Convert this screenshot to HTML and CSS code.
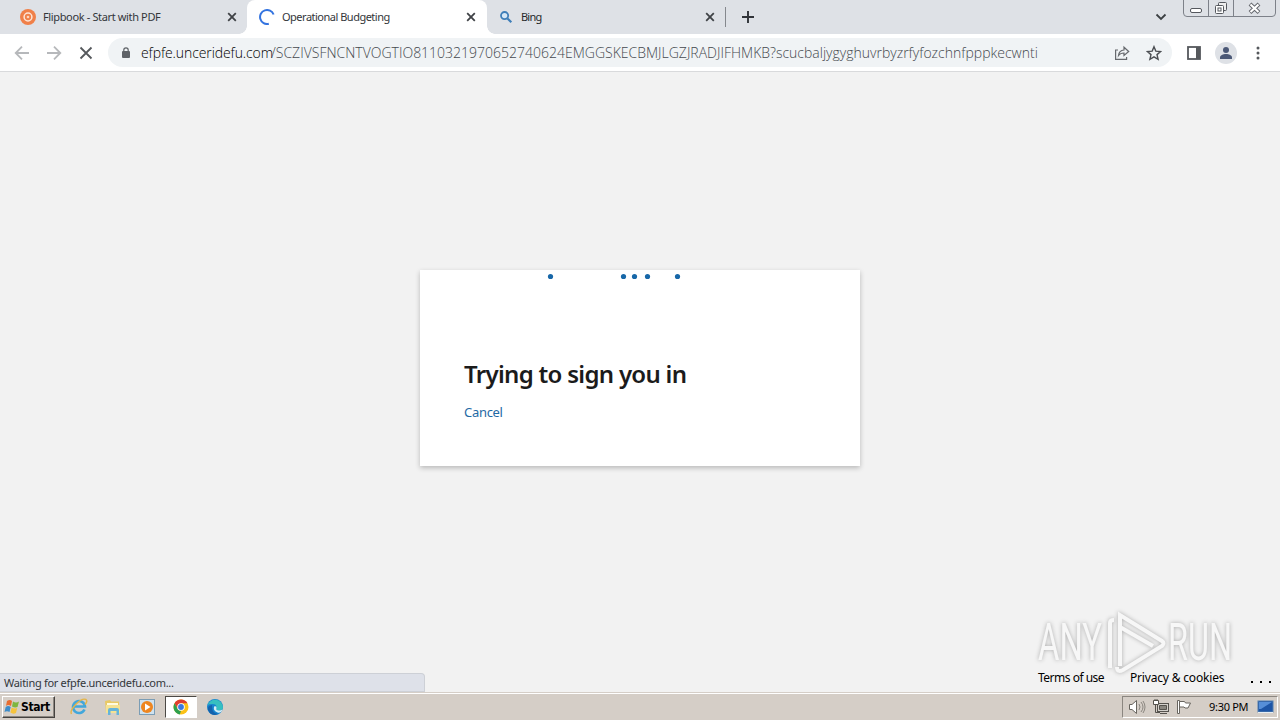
FILE: index.html
```html
<!DOCTYPE html>
<html lang="en">
<head>
<meta charset="utf-8">
<title>Operational Budgeting</title>
<link rel="stylesheet" href="styles.css">
</head>
<body>
<div class="desktop">
  <header class="tabstrip">
    <div class="tab tab-first">
      <svg class="favicon" width="16" height="16" viewBox="0 0 16 16"><circle cx="8" cy="8" r="8" fill="#f08049"/><circle cx="8" cy="8" r="3.900" fill="none" stroke="#fde5d8" stroke-width="1.500"/><circle cx="8" cy="8" r="1.300" fill="#fbd5c0"/></svg>
      <span class="tab-title t-flip">Flipbook - Start with PDF</span>
      <svg class="close" width="10" height="10" viewBox="0 0 10 10"><path d="M1.2 1.2l7.600 7.600M8.800 1.200L1.200 8.800"/></svg>
    </div>
    <div class="tab tab-active">
      <svg class="favicon" width="16" height="16" viewBox="0 0 16 16"><path d="M14.600 5.500A7 7 0 1 0 9.800 14.800" fill="none" stroke="#3474e0" stroke-width="2"/></svg>
      <span class="tab-title t-oper">Operational Budgeting</span>
      <svg class="close" width="10" height="10" viewBox="0 0 10 10"><path d="M1.2 1.2l7.600 7.600M8.800 1.200L1.200 8.800"/></svg>
    </div>
    <div class="tab tab-last">
      <svg class="favicon" width="16" height="16" viewBox="0 0 16 16"><circle cx="6.600" cy="6.600" r="3.600" fill="#d5e7f6" stroke="#3e7eb8" stroke-width="1.800"/><path d="M9.500 9.500l3.800 3.800" stroke="#3e7eb8" stroke-width="2.200"/></svg>
      <span class="tab-title t-bing">Bing</span>
      <svg class="close" width="10" height="10" viewBox="0 0 10 10"><path d="M1.2 1.2l7.600 7.600M8.800 1.200L1.200 8.800"/></svg>
    </div>
    <i class="separator"></i>
    <svg class="newtab" width="12" height="12" viewBox="0 0 12 12"><path d="M6 0v12M0 6h12" stroke="#303338" stroke-width="1.900"/></svg>
    <svg class="chevron" width="12" height="8" viewBox="0 0 12 8"><path d="M1.500 1.500L6 6l4.500-4.500" fill="none" stroke="#3c4043" stroke-width="1.800"/></svg>
    <div class="window-buttons">
      <svg width="93" height="17" viewBox="0 0 93 17" fill="none">
        <path d="M.5 0v13q0 3.500 3.500 3.500h85q3.500 0 3.500-3.500V0M25.500 0v16M50.500 0v16" stroke="#7d8189"/>
        <rect x="7.500" y="8.500" width="11" height="4" rx="1.500" fill="#fff" stroke="#55585e"/>
        <rect x="35.500" y="2.500" width="8" height="8" rx="1" fill="#eee" stroke="#55585e"/>
        <rect x="32.500" y="5.500" width="8" height="8" rx="1" fill="#fff" stroke="#55585e"/><rect x="35" y="8" width="3" height="3" stroke="#55585e"/>
        <path d="M67 4l9 8.500M76 4l-9 8.500" stroke="#62656b" stroke-width="4"/><path d="M67.500 4.500l8 7.500M75.500 4.500l-8 7.500" stroke="#fff" stroke-width="2.200"/>
      </svg>
    </div>
  </header>

  <nav class="toolbar">
    <svg class="nav-icon" width="16" height="16" viewBox="0 0 16 16"><path d="M15 8H2M8 1.700L1.700 8 8 14.300" stroke="#b6b8bb"/></svg>
    <svg class="nav-icon" width="16" height="16" viewBox="0 0 16 16"><path d="M1 8h13M8 1.700L14.300 8 8 14.300" stroke="#b6b8bb"/></svg>
    <svg class="nav-icon" width="16" height="16" viewBox="0 0 16 16"><path d="M2.500 2.500l11 11M13.500 2.500l-11 11" stroke="#55585c"/></svg>
    <div class="omnibox">
      <svg class="lock" width="8" height="11" viewBox="0 0 8 11"><rect y="4" width="8" height="7" rx="1" fill="#5f6368"/><path d="M1.800 5V3a2.200 2.200 0 0 1 4.400 0v2" fill="none" stroke="#5f6368" stroke-width="1.200"/></svg>
      <span class="url"><span class="host">efpfe.unceridefu.com</span><span class="path">/SCZIVSFNCNTVOGTIO8110321970652740624EMGGSKECBMJLGZJRADJIFHMKB?scucbaljygyghuvrbyzrfyfozchnfpppkecwnti</span></span>
      <svg class="share" width="16" height="16" viewBox="0 0 16 16" fill="none" stroke="#66696d" stroke-width="1.200"><path d="M4 5H1.600v9.400h11V12"/><path d="M4.500 10.500c.4-3.800 2.600-5.300 5.500-5.500V2.200L14.700 6.500 10 10.500V8c-2.500 0-4.300.8-5.500 2.500z"/></svg>
      <svg class="star" width="16" height="16" viewBox="0 0 16 16"><path d="M8 1.700l1.800 4.400 4.800.4-3.600 3.100 1.100 4.700L8 11.800l-4.100 2.500L5 9.600 1.400 6.500l4.800-.4z" fill="none" stroke="#4c4f53" stroke-width="1.400"/></svg>
    </div>
    <svg class="panel" width="14" height="14" viewBox="0 0 14 14"><rect x="1" y="1" width="12" height="12" fill="#fff" stroke="#55585c" stroke-width="1.800"/><path d="M9 1h4v12H9z" fill="#55585c"/></svg>
    <svg class="profile" width="22" height="22" viewBox="0 0 22 22"><circle cx="11" cy="11" r="11" fill="#dee1e6"/><circle cx="11" cy="8" r="3" fill="#4b5876"/><path d="M5 17v-1.500c0-2.200 3-3.500 6-3.500s6 1.300 6 3.500V17z" fill="#4b5876"/></svg>
    <svg class="more" width="4" height="14" viewBox="0 0 4 14" fill="#55585c"><circle cx="2" cy="2" r="1.500"/><circle cx="2" cy="7" r="1.500"/><circle cx="2" cy="12" r="1.500"/></svg>
  </nav>

  <main class="page">
    <section class="card">
      <svg class="progress" width="440" height="13" viewBox="0 0 440 13" fill="#1767a8"><circle cx="130.500" cy="6.500" r="2.600"/><circle cx="203.500" cy="6.500" r="2.600"/><circle cx="214.500" cy="6.500" r="2.600"/><circle cx="227.500" cy="6.500" r="2.600"/><circle cx="257.500" cy="6.500" r="2.600"/></svg>
      <h1 class="heading">Trying to sign you in</h1>
      <a class="cancel">Cancel</a>
    </section>
    <svg class="watermark" width="210" height="74" viewBox="0 0 210 74">
      <text x="8" y="53" textLength="64" lengthAdjust="spacingAndGlyphs">ANY</text><text x="138" y="53" textLength="64" lengthAdjust="spacingAndGlyphs">RUN</text><path d="M80 61V16q0-3 4-3M90 59V8l42 26q3 2 0 5L93 63q-6 3-6-3M90 20l33 19"/>
    </svg>
    <footer class="legal">
      <span class="terms">Terms of use</span><span class="privacy">Privacy &amp; cookies</span>
      <svg class="dots" width="22" height="3" viewBox="0 0 22 3"><path d="M1 0h2v2H1zM10 0h2v2h-2zM19 0h2v2h-2z"/></svg>
    </footer>
    <div class="status">Waiting for efpfe.unceridefu.com...</div>
  </main>

  <footer class="taskbar">
    <div class="start">
      <svg width="17" height="16" viewBox="0 0 17 16"><path d="M3 2q3-2 5 0L7 7Q4 5 2 7z" fill="#e86d2f"/><path d="M9 2.500q3 2 6 0L13.500 8Q11 9 8 7.500z" fill="#7eb63f"/><path d="M1.700 8q2.500-2 5 0l-1.200 5Q3 11.500.5 13z" fill="#3d8cc9"/><path d="M7.700 8.500q3 1.500 5.500.5L12 14q-3 1.500-5.600-.5z" fill="#f5c33c"/></svg>
      <span>Start</span>
    </div>
    <div class="task">
      <svg width="18" height="18" viewBox="0 0 18 18" fill="none"><path d="M14.500 11.500A6 6 0 1 1 15 8.500H4" stroke="#42a7db" stroke-width="2.600"/><path d="M1.500 16C-1 12 11-1 16 1.500q2 1.500-1 5" stroke="#e4b548" stroke-width="1.400"/></svg>
    </div>
    <div class="task">
      <svg width="18" height="18" viewBox="0 0 18 18"><path d="M1 3l5-1 1 1.500h8V15H2z" fill="#e9c964"/><path d="M3 5h11v2H3z" fill="#fffbe0"/><path d="M2 7h14v8H2z" fill="#f5e293"/><path d="M4 17v-5q0-2 2-2h7q2 0 2 2v5h-2.500v-4h-6v4z" fill="#66b4d9"/></svg>
    </div>
    <div class="task">
      <svg width="18" height="18" viewBox="0 0 18 18"><rect x="1.500" y="1.500" width="15" height="15" fill="#cfe2ef" stroke="#7b9db5"/><circle cx="9" cy="9" r="6" fill="#ee8620"/><path d="M7 5.500v7L12.500 9z" fill="#fff"/></svg>
    </div>
    <div class="task task-active">
      <svg width="16" height="16" viewBox="0 0 16 16"><circle cx="8" cy="8" r="7.500" fill="#fbc116"/><path d="M1.500 4.250A7.500 7.500 0 0 1 14.500 4.250H8L4.750 9.900z" fill="#df3e30"/><path d="M1.500 4.250L4.750 9.900Q6 12 8 11.750L6.800 15.400A7.500 7.500 0 0 1 1.500 4.250z" fill="#2da04e"/><circle cx="8" cy="8" r="3.800" fill="#fff"/><circle cx="8" cy="8" r="2.900" fill="#3b79df"/></svg>
    </div>
    <div class="task">
      <svg width="18" height="18" viewBox="0 0 18 18"><circle cx="9" cy="9" r="8" fill="#1683cf"/><path d="M1.500 7A8 8 0 0 1 17 9q0 3.500-4.500 3.500-3 0-2-2.500Q11 6 6.500 6 3 6 1.500 7z" fill="#36bfc0"/><path d="M6 9q0 6 6 7-7 3-10-4-1-4 4-5z" fill="#1462ac"/><path d="M8 8.500q3-1 2.500 1.500-1 2.500 2.500 2.500 2 0 3.500-1-1.500 4-5 3Q7 13 8 8.500z" fill="#d3eef6"/></svg>
    </div>
    <div class="tray">
      <svg class="tray-icon" width="18" height="16" viewBox="0 0 18 16" fill="none" stroke="#68655f"><path d="M1.500 5.500H4L8.500 1.500v13L4 10.500H1.500z" fill="#fff"/><path d="M11 5q2 3 0 6M13 3q4 5 0 10M15 2q4 6 0 12" stroke="#77736d" stroke-width=".8"/></svg>
      <svg class="tray-icon" width="18" height="16" viewBox="0 0 18 16" fill="none" stroke="#55524d"><rect x="5.500" y="4.500" width="11" height="8" fill="#d3d0cb"/><path d="M7.500 6.500h7v4h-7z" fill="#89867f"/><path d="M8 14.500h7M3.500 6v7.500H8"/><path d="M1.500 1.500h5v4h-5zM3 0v2M5 0v2" fill="#fff"/></svg>
      <svg class="tray-icon" width="16" height="16" viewBox="0 0 16 16" fill="#fff" stroke="#68655f"><path d="M1.500 1.500h2v13h-2z"/><path d="M3.500 2.500h5l1 1.500h5L12 9H9L8 8H3.500z"/></svg>
      <span class="clock">9:30 PM</span>
      <svg class="desk-icon" width="17" height="14" viewBox="0 0 17 14"><rect x="1" y="1" width="15" height="11" fill="#1d55a6" stroke="#557fad"/><path d="M2 2h13L4 9H2z" fill="#568fd8"/><path d="M1 12.500h15" stroke="#e7edf2"/></svg>
    </div>
  </footer>
</div>
</body>
</html>
```
FILE: styles.css
```css
* { box-sizing: border-box; }
body { margin: 0; overflow: hidden; font-family: "Noto Sans", sans-serif; font-size: 11px; color: #202124; }
svg { display: block; flex: none; }
.desktop { width: 1280px; height: 720px; display: flex; flex-direction: column; background: #f2f2f2; }

.tabstrip { position: relative; height: 34px; flex: none; display: flex; align-items: center; background: #dee1e6; }
.tab { height: 34px; display: flex; align-items: center; }
.tab-first { width: 247px; padding: 0 10px 0 20px; }
.tab-active { position: relative; width: 240px; padding: 0 11px 0 12px; background: #fff; border-radius: 8px 8px 0 0; }
.tab-active::before, .tab-active::after { content: ""; position: absolute; bottom: 0; width: 8px; height: 8px; }
.tab-active::before { left: -8px; background: radial-gradient(circle at 0 0, transparent 7.5px, #fff 8px); }
.tab-active::after { right: -8px; background: radial-gradient(circle at 100% 0, transparent 7.5px, #fff 8px); }
.tab-last { width: 238px; padding: 0 10px 0 11px; }
.tab-title { margin-left: 7px; padding-bottom: 2px; flex: 1; white-space: nowrap; color: #33363a; }
.t-flip { letter-spacing: -.36px; }
.t-oper { letter-spacing: -.5px; }
.t-bing { letter-spacing: -.8px; color: #25282b; }
.close { fill: none; stroke: #3f4246; stroke-width: 1.8; }
.separator { width: 1px; height: 20px; background: #85888d; }
.newtab { margin-left: 16px; }
.chevron { margin-left: 401px; }
.window-buttons { position: absolute; left: 1183px; top: 0; }

.toolbar { height: 38px; flex: none; display: flex; align-items: center; padding: 0 20px 0 14px; background: #fff; border-bottom: 1px solid #d9dadc; }
.nav-icon { margin-right: 16px; fill: none; stroke-width: 1.8; }
.omnibox { width: 1064px; height: 29px; margin-left: -2px; display: flex; align-items: center; padding: 0 10px 0 14px; background: #f0f3f5; border-radius: 15px; }
.url { flex: 1; margin-left: 11px; white-space: nowrap; font: 300 14px "Open Sans", sans-serif; }
.host { display: inline-block; width: 130px; letter-spacing: -.1px; color: #000; }
.path { color: #45494e; }
.share { margin-right: 16px; }
.panel { margin-left: 15px; }
.profile { margin-left: 14px; }
.more { margin-left: auto; }

.page { position: relative; flex: 1; background: #f2f2f2; }
.card { width: 440px; height: 196px; margin: 198px auto 0; background: #fff; box-shadow: 0 2px 5px rgba(0, 0, 0, .24); }
.heading { margin: 75px 0 0 44px; font: 600 24px/32px "Noto Sans", sans-serif; letter-spacing: -.7px; color: #1b1b1b; white-space: nowrap; }
.cancel { display: inline-block; margin: 13px 0 0 44px; font: 13px/18px "Noto Sans", sans-serif; letter-spacing: -.3px; color: #1f6aa5; }
.legal { position: absolute; left: 1038px; top: 597px; display: flex; align-items: center; font: 12px/18px "Noto Sans", sans-serif; color: #000; white-space: nowrap; }
.terms { width: 92px; letter-spacing: -.5px; }
.privacy { width: 120px; letter-spacing: -.18px; }
.dots { margin-top: 8px; }
.watermark { position: absolute; left: 1030px; top: 535px; overflow: visible; font: 52px "Roboto", sans-serif; fill: #f7f7f7; filter: drop-shadow(0 0 2px #aaa); }
.watermark path { fill: none; stroke: #f7f7f7; stroke-width: 4; }
.status { position: absolute; left: 0; bottom: 0; width: 425px; height: 19px; padding-left: 4px; line-height: 17px; letter-spacing: -.29px; color: #33363a; background: #dee1e9; border: 1px solid #cdd0d6; border-left: 0; border-radius: 0 4px 0 0; }

.taskbar { height: 28px; flex: none; display: flex; align-items: center; padding: 2px 2px 2px; background: #d5cec7; border-top: 1px solid #d5cec7; box-shadow: inset 0 1px #fff; }
.start { width: 53px; height: 22px; margin-right: 8px; display: flex; align-items: center; padding-left: 1px; font: 700 12px "DejaVu Sans Condensed", sans-serif; letter-spacing: -.4px; color: #000; border: 1px solid; border-color: #fff #45423f #45423f #fff; box-shadow: inset -1px -1px #8b8680; }
.task { width: 32px; height: 22px; margin-right: 2px; display: flex; align-items: center; justify-content: center; }
.task-active { background: #fff; border: 1px solid; border-color: #4c4945 #fff #fff #4c4945; }
.tray { width: 156px; height: 22px; margin-left: auto; display: flex; align-items: center; padding-left: 5px; border: 1px solid; border-color: #8b8680 #fff #fff #8b8680; }
.tray-icon { margin-right: 6px; }
.clock { width: 48px; margin-left: 11px; letter-spacing: -.3px; color: #000; white-space: nowrap; }
```
